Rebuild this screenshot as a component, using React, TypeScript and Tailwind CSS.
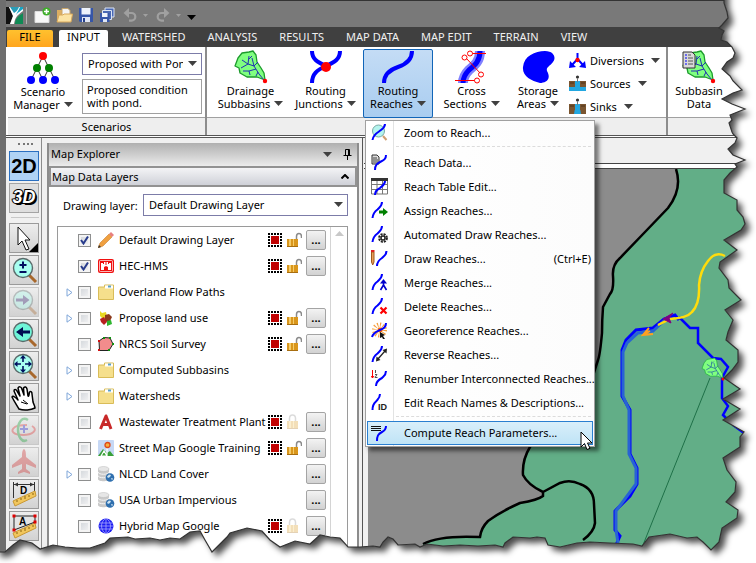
import React from 'react';
import { clsx } from 'clsx';

const Caret = ({ className = 'text-[#404040]' }: { className?: string }) => (
  <svg width="9" height="5" viewBox="0 0 9 5" className={clsx('inline-block shrink-0', className)}>
    <path d="M0 0h9L4.500 5z" fill="currentColor" />
  </svg>
);

/* ---------- Quick access bar ---------- */

const Logo = () => (
  <svg width="17" height="17" viewBox="0 0 17 17">
    <path d="M0 0h3l4 9-3 8H0z" fill="#111" />
    <path d="M3 0h14v4C11 8 9 11 8 17H4l3-8z" fill="#fff" />
    <path d="M4 0h9c-1 3-3 5-5 6z" fill="#2a9db8" />
    <path d="M17 6v11H9C9 12 12 9 17 6z" fill="#0f8a55" />
    <path d="M14 0h3v2c-2 2-5 3-7 6 1-3 3-5 4-8z" fill="#19a5c4" />
  </svg>
);

const NewIcon = () => (
  <svg width="17" height="17" viewBox="0 0 17 17">
    <path d="M1 4.500h14v11H1z" fill="#f8f8f8" stroke="#ddd" />
    <circle cx="12.500" cy="4.500" r="4" fill="#3fae2a" />
    <path d="M12.500 2v5M10 4.500h5" stroke="#fff" strokeWidth="1.600" />
  </svg>
);

const OpenIcon = () => (
  <svg width="17" height="17" viewBox="0 0 17 17">
    <path d="M1 3h5l1 1.500h7V15H1z" fill="#dcae62" />
    <path d="M6 1.500h6l2 2V11H6z" fill="#f5f5f5" stroke="#c9a66a" />
    <path d="M1 15l2-7h4l1-1h8.500L15 15z" fill="#fbe3a4" stroke="#d9a95a" />
  </svg>
);

const SaveIcon = () => (
  <svg width="16" height="16" viewBox="0 0 16 16">
    <path d="M1 1h14v14H2L1 14z" fill="#3656a8" />
    <path d="M3.500 1h9v6.500h-9z" fill="#eef3fb" />
    <path d="M4 10h8v5H4z" fill="#dfe6f5" />
    <path d="M5 11h2v4H5z" fill="#26408a" />
  </svg>
);

const SaveAllIcon = () => (
  <svg width="16" height="16" viewBox="0 0 16 16">
    <path d="M6 1h9v9H6z" fill="#4a69b5" stroke="#dce5f5" />
    <path d="M3.500 3.500h9v9h-9z" fill="#4a69b5" stroke="#dce5f5" />
    <path d="M1 6h9.500v9H1z" fill="#3656a8" />
    <path d="M3 6h5.500v4H3z" fill="#eef3fb" />
    <path d="M4 12h4v3H4z" fill="#dfe6f5" />
  </svg>
);

const UndoIcon = ({ flip = false }: { flip?: boolean }) => (
  <svg width="14" height="14" viewBox="0 0 14 14" className={flip ? '-scale-x-100' : ''}>
    <path d="M2 5h6.500a3.800 3.800 0 0 1 0 7.600H6" fill="none" stroke="#a0a0a0" strokeWidth="2.200" />
    <path d="M6 0L0.500 5L6 10z" fill="#a0a0a0" />
  </svg>
);

/* ---------- Ribbon icons ---------- */

const leaf = 'M0 15L3 7L7 2L14 1L18 0L21 4L22 11L26 17L29 22L30 29L22 26L12 26L5 22L4 17z';
const veins = 'M7 9L13 13L19 15L24 23L29 29M13 13L14 5M14 8L17 5M13 13L6 17M19 15L17 7M19 15L23 11M21 18L14 20L8 20M14 20L15 24M23 21L21 25';

const ScenarioIcon = () => (
  <svg width="34" height="34" viewBox="0 0 34 34">
    <path d="M17 5L5 29M17 5L29 29M11 17L17 29M23 17L17 29" stroke="#333" />
    <circle cx="17" cy="5" r="4" fill="#f00" />
    <circle cx="11" cy="17" r="4" fill="#008000" />
    <circle cx="23" cy="17" r="4" fill="#008000" />
    <circle cx="5" cy="29" r="4" fill="#00f" />
    <circle cx="17" cy="29" r="4" fill="#00f" />
    <circle cx="29" cy="29" r="4" fill="#00f" />
  </svg>
);

const SubbasinIcon = ({ sheet = false }: { sheet?: boolean }) => (
  <svg width="34" height="34" viewBox="0 0 34 34">
    <g transform="translate(1 1)">
      <path d={leaf} fill="#80ff80" stroke="#1c9a2c" strokeWidth="1.300" strokeLinejoin="round" />
      <path d={veins} fill="none" stroke="#2030b0" />
      <circle cx="30" cy="30" r="2.200" fill="#f00" />
    </g>
    {sheet && (
      <g>
        <path d="M1 2h9l3 3v13H1z" fill="#d9d9d9" stroke="#333" />
        <path d="M3 5h2M3 8h2M3 11h2M3 14h2" stroke="#00f" />
        <path d="M6 5h3M6 8h5M6 11h5M6 14h5" stroke="#555" />
      </g>
    )}
  </svg>
);

const JunctionIcon = () => (
  <svg width="34" height="34" viewBox="0 0 34 34">
    <path d="M3 1C3 9 8 12 17 16M31 1C31 9 26 12 17 16C8 20 3 24 3 33" fill="none" stroke="#00f" strokeWidth="4" />
    <circle cx="17" cy="17" r="5" fill="#f00" />
  </svg>
);

const ReachIcon = () => (
  <svg width="34" height="34" viewBox="0 0 34 34">
    <path d="M31 1C31 9 26 14 17 17C8 20 3 25 3 33" fill="none" stroke="#00f" strokeWidth="4" />
  </svg>
);

const CrossIcon = () => (
  <svg width="34" height="34" viewBox="0 0 34 34">
    <path d="M25 1C25 11 20 15 14 20C10 24 8 27 8 33" fill="none" stroke="#8080ff" strokeWidth="10" />
    <path d="M25 1C25 11 20 15 14 20C10 24 8 27 8 33" fill="none" stroke="#00f" strokeWidth="5" />
    <g stroke="#f00" fill="none">
      <path d="M16 3.500h15M11 8l15 16M0 30.500h20" />
      <circle cx="15" cy="3.500" r="2.500" fill="#fff" />
      <circle cx="9.500" cy="7.500" r="2.500" fill="#fff" />
      <circle cx="26" cy="24.500" r="2.500" fill="#fff" />
      <circle cx="22" cy="30.500" r="2.500" fill="#fff" />
    </g>
  </svg>
);

const StorageIcon = () => (
  <svg width="34" height="34" viewBox="0 0 34 34">
    <path d="M2 17C3 6 14 1 24 1C34 1 35 9 32 12C28 17 25 17 26 21C31 30 24 33 19 33C10 31 1 26 2 17z" fill="#00f" />
  </svg>
);

const DiversionIcon = () => (
  <svg width="17" height="17" viewBox="0 0 17 17">
    <path d="M8.500 1v7M8.500 7L3 13M8.500 7L14 13" stroke="#00f" strokeWidth="2" />
    <path d="M0 16l1-7 6 6zM17 16l-1-7-6 6z" fill="#00f" />
    <circle cx="8.500" cy="8" r="2.200" fill="#f00" />
  </svg>
);

const SourceIcon = ({ down = false }: { down?: boolean }) => (
  <svg width="17" height="17" viewBox="0 0 17 17">
    <path d="M0 6h17v10H0z" fill="#22a7e0" />
    <path d="M0 6h6v6H0zM11 6h6v6h-6z" fill="#7a5530" />
    <path d="M1 8h4M12 8h4" stroke="#4f3418" />
    {down && <path d="M0 10h6l-1 6H0zM11 10h6v6h-5z" fill="#7a5530" />}
    <circle cx="8.500" cy="2" r="1.600" fill="#333" />
    <path d="M8.500 3v4" stroke="#777" />
  </svg>
);

interface RibbonButtonProps {
  icon: React.ReactNode;
  top: string;
  bottom: string;
  caret?: boolean;
  active?: boolean;
}

const RibbonButton: React.FC<RibbonButtonProps> = ({ icon, top, bottom, caret = true, active }) => (
  <button
    className={clsx(
      'flex h-[69px] w-full flex-col items-center rounded-xs border leading-[13px]',
      active ? 'border-[#1165b8] bg-linear-to-b from-[#c4dcf5] to-[#a9cdf0]' : 'border-transparent'
    )}
  >
    {icon}
    <span className="whitespace-nowrap">{top}</span>
    <span className="flex items-center gap-1 whitespace-nowrap">
      {bottom}
      {caret && <Caret />}
    </span>
  </button>
);

/* ---------- Drop-down menu ---------- */

const curve = 'M15 1C15 5 13 6 10 7.500C6 9.500 4 11 4 16';
const curveLeft = 'M11 0C11 4 9 5 6.500 7.500C3 10 2 12 1.500 16';

const MenuIcon = ({ d, children }: { d: string; children?: React.ReactNode }) => (
  <svg width="17" height="17" viewBox="0 0 17 17" className="shrink-0">
    {children}
    <path d={d} fill="none" stroke="#00f" strokeWidth="2" />
  </svg>
);

const menuItems = [
  {
    label: 'Zoom to Reach...',
    sepAfter: true,
    icon: (
      <MenuIcon d="M14 0C14 4 11 5 8 7.500C4 10 2 12 1.500 16">
        <circle cx="7.500" cy="7" r="6" fill="#b4f4ee" stroke="#79a9a5" />
        <path d="M12 12l3.500 4" stroke="#d0a070" strokeWidth="2" />
      </MenuIcon>
    ),
  },
  {
    label: 'Reach Data...',
    icon: (
      <MenuIcon d={curve}>
        <path d="M1 1h5l2 2v7H1z" fill="#ddd" stroke="#333" />
        <path d="M2 4h4M2 6h5M2 8h5" stroke="#444" />
      </MenuIcon>
    ),
  },
  {
    label: 'Reach Table Edit...',
    icon: (
      <MenuIcon d="M14 3C14 7 11 8 9 10C6 12 4 13 4 17">
        <path d="M.5 1h16v15H.5zM6 2v14M11.500 2v14M0 6.500h17M0 11.500h17" fill="none" stroke="#777" />
        <path d="M0 0h17v3H0z" fill="#333" />
      </MenuIcon>
    ),
  },
  {
    label: 'Assign Reaches...',
    icon: (
      <MenuIcon d={curveLeft}>
        <path d="M8 8.500h4V6l5 4-5 4v-2.500H8z" fill="#008000" />
      </MenuIcon>
    ),
  },
  {
    label: 'Automated Draw Reaches...',
    icon: (
      <MenuIcon d={curveLeft}>
        <circle cx="12" cy="12" r="3.800" fill="#fff" stroke="#222" strokeWidth="2.200" strokeDasharray="2 1" />
        <circle cx="12" cy="12" r="2" fill="none" stroke="#222" strokeWidth="1.500" />
      </MenuIcon>
    ),
  },
  {
    label: 'Draw Reaches...',
    shortcut: '(Ctrl+E)',
    icon: (
      <MenuIcon d="M15.500 1C15.500 5 13 6 11 8C8 10 6 12 6 16">
        <path d="M.5 2h2.500v10L1.700 15 .5 12z" fill="#e8a05c" stroke="#a0581c" />
        <path d="M0 0h3.500v2H0z" fill="#e02020" />
      </MenuIcon>
    ),
  },
  {
    label: 'Merge Reaches...',
    icon: (
      <MenuIcon d={curveLeft}>
        <path d="M12.500 7v5M12.500 11L9.500 16M12.500 11l3 5" stroke="#00c" strokeWidth="1.600" />
        <path d="M9 9.500L12.500 5L16 9.500z" fill="#00c" />
      </MenuIcon>
    ),
  },
  {
    label: 'Delete Reaches...',
    icon: (
      <MenuIcon d={curveLeft}>
        <path d="M9.500 9.500l6 6M15.500 9.500l-6 6" stroke="#f00" strokeWidth="2.200" />
      </MenuIcon>
    ),
  },
  {
    label: 'Georeference Reaches...',
    icon: (
      <MenuIcon d="M15 1C15 5 12 7 9 8C5 10 2 11 1 15">
        <circle cx="8.500" cy="8" r="5" fill="none" stroke="#f5a142" strokeWidth="5" strokeDasharray="1 1.600" />
        <circle cx="9" cy="8" r="2.500" fill="#ff6a00" />
        <path d="M9 10l5 3-2 1 2 3h-2l-1-2-2 1z" fill="#111" />
      </MenuIcon>
    ),
  },
  {
    label: 'Reverse Reaches...',
    icon: (
      <MenuIcon d={curveLeft}>
        <path d="M6.500 13.500L14 5" stroke="#222" strokeWidth="1.300" />
        <path d="M16 2.500l-.5 5-4-3.500zM5 15.500l.5-5 4 3.500z" fill="#222" />
      </MenuIcon>
    ),
  },
  {
    label: 'Renumber Interconnected Reaches...',
    icon: (
      <MenuIcon d="M15 1C15 5 13 6 11 8C7 10 5 12 5 16">
        <path d="M1.500 0v8M0 6l1.500 2L3 6" fill="none" stroke="#f00" />
        <path d="M4.500 0v3M4 4.500h2l-2 3h2.500" fill="none" stroke="#555" />
      </MenuIcon>
    ),
  },
  {
    label: 'Edit Reach Names & Descriptions...',
    sepAfter: true,
    icon: (
      <MenuIcon d="M9 0C9 4 7 5 5 7.500C2 10 1.500 12 1.500 16">
        <text x="7" y="16" fontSize="9" fontWeight="bold" fontFamily="Liberation Sans" fill="#222">ID</text>
      </MenuIcon>
    ),
  },
  {
    label: 'Compute Reach Parameters...',
    highlighted: true,
    icon: (
      <MenuIcon d="M15 2C15 6 13 7 11 8C7 10 6 12 6 17">
        <path d="M0 2.500h10M0 4.500h10M0 6.500h10" stroke="#111" />
      </MenuIcon>
    ),
  },
];

const ReachMenu = () => (
  <div
    role="menu"
    className="absolute left-[2px] top-[71px] z-20 w-[230px] border border-[#a0a0a0] bg-linear-to-r from-white from-[28px] to-[#fcfcfc] pb-px shadow-[4px_4px_4px_rgba(0,0,0,0.5)]"
  >
    <div className="absolute inset-y-0 left-[27px] w-px bg-[#e2e3e3]" />
    {menuItems.map((item) => (
      <React.Fragment key={item.label}>
        <button
          role="menuitem"
          className={clsx(
            'relative mx-px flex h-[24px] w-[226px] items-center border pb-px pl-[3px]',
            item.highlighted ? 'border-[#2a7fd0] bg-linear-to-b from-[#d9effa] to-[#bfe4f6]' : 'border-transparent'
          )}
        >
          {item.icon}
          <span className="ml-[16px] whitespace-nowrap">{item.label}</span>
          {item.shortcut && <span className="ml-auto pr-px">{item.shortcut}</span>}
        </button>
        {item.sepAfter && <div className="ml-[30px] mr-[3px] mt-px h-[5px] border-t border-dashed border-[#dcdcdc]" />}
      </React.Fragment>
    ))}
    <svg width="14" height="20" viewBox="0 0 14 20" className="absolute -bottom-[5px] right-0">
      <path d="M1 1v15l3.500-3.500L7 18.500l3-1.200L7.500 12H12z" fill="#fff" stroke="#000" />
    </svg>
  </div>
);

/* ---------- Left tool strip ---------- */

const Lens = ({ fill = '#a8fff0', children }: { fill?: string; children: React.ReactNode }) => (
  <svg width="28" height="28" viewBox="0 0 28 28">
    <path d="M19 19l7 7" stroke="#a8682c" strokeWidth="3" />
    <circle cx="13" cy="12" r="9.500" fill={fill} stroke="#5a6a6a" strokeWidth="1.400" />
    {children}
  </svg>
);

const ruler = (
  <g>
    <path d="M3 21L25 11l1 5L5 26z" fill="#f1c65c" stroke="#c99835" />
    <path d="M7 20v2M11 18v2M15 16v3M19 15v2M23 13v2" stroke="#8a6410" />
  </g>
);

const tools = [
  {
    name: 'Pointer',
    icon: (
      <svg width="28" height="28" viewBox="0 0 28 28">
        <path d="M8 3v18l4-4 4 9 3-1-4-9h5z" fill="#fff" stroke="#111" />
        <path d="M28 19v9h-9z" fill="#000" />
      </svg>
    ),
  },
  { name: 'Zoom in or out', icon: <Lens><path d="M13 5.500v7M9.500 9h7M9.500 16h7" stroke="#001060" strokeWidth="2" /></Lens> },
  { name: 'Zoom forward', off: true, icon: <Lens><path d="M6 10.500h7V7l6.500 5-6.500 5v-3.500H6z" fill="#302070" /></Lens> },
  { name: 'Zoom back', icon: <Lens fill="#6ff5d8"><path d="M20 10.500h-7V7l-7 5 7 5v-3.500h7z" fill="#000a50" /></Lens> },
  {
    name: 'Zoom extents',
    icon: (
      <Lens>
        <path d="M13 5v5M13 14v5M6 12h5M15 12h5" stroke="#001060" strokeWidth="1.600" />
        <path d="M13 3l-3 3.500h6zM13 21l-3-3.500h6zM4 12l3.500-3v6zM22 12l-3.500-3v6z" fill="#001060" />
      </Lens>
    ),
  },
  {
    name: 'Pan',
    icon: (
      <svg width="28" height="28" viewBox="0 0 28 28">
        <path
          d="M9 25C6 20 4 17 2 13C3 11 6 14 8 16L4 7C4 5 6 5 7 7L10 12L8 4C9 2 11 3 11.500 4L14 11L13.500 4C15 2 16.500 3 17 5L18 12C19 13 19 10 19.500 8C21 7 22 8 22 10L23 18C24 21 25 22 25 24C21 26 14 27 9 25z"
          fill="#fff"
          stroke="#000"
          strokeWidth="1.500"
          strokeLinejoin="round"
        />
        <path d="M13 16l5 4M11 18l6 2" stroke="#000" />
      </svg>
    ),
  },
  {
    name: 'Rotate',
    off: true,
    icon: (
      <svg width="28" height="28" viewBox="0 0 28 28" fill="none">
        <path d="M22 10C29 14 22 19 13 19C4 19 -1 15 5 11C8 9 12 9 17 9" stroke="#e03030" strokeWidth="2" />
        <path d="M18 4C12 0 8 7 8 13C8 21 12 27 17 24" stroke="#10a030" strokeWidth="2.500" />
        <path d="M14 9v8M10 13h8" stroke="#2020d0" strokeWidth="2" />
      </svg>
    ),
  },
  {
    name: 'Fly',
    off: true,
    icon: (
      <svg width="28" height="28" viewBox="0 0 28 28">
        <path d="M14 1C16 2 16 6 16 9L26 17v3l-10-4v5l4 3v2l-6-2-6 2v-2l4-3v-5L2 20v-3l10-8C12 6 12 2 14 1z" fill="#d02828" />
      </svg>
    ),
  },
  {
    name: 'Measure distance',
    icon: (
      <svg width="28" height="28" viewBox="0 0 28 28">
        <path d="M3.500 2v16M24.500 2v9M4 4.500h20" stroke="#333" />
        <path d="M4 4.500l4-2v4zM24 4.500l-4-2v4z" fill="#333" />
        <text x="10" y="14" fontSize="10" fontWeight="bold" fontFamily="Liberation Sans">D</text>
        {ruler}
      </svg>
    ),
  },
  {
    name: 'Measure area',
    icon: (
      <svg width="28" height="28" viewBox="0 0 28 28">
        {ruler}
        <path d="M4 4h21v6L4 18z" fill="#e4e4e4" stroke="#222" />
        <path d="M2.500 2.500h3v3h-3zM23.500 2.500h3v3h-3zM23.500 8.500h3v3h-3zM2.500 16.500h3v3h-3z" fill="#e00000" />
        <text x="9" y="13" fontSize="10" fontWeight="bold" fontFamily="Liberation Sans">A</text>
      </svg>
    ),
  },
];

/* ---------- Layer list ---------- */

const layerIcons: Record<string, React.ReactNode> = {
  pencil: (
    <svg width="16" height="16" viewBox="0 0 16 16">
      <path d="M0 16l2-5L11 2l3 3-9 9z" fill="#f0a040" stroke="#c98030" strokeWidth=".6" />
      <path d="M11 2l2-2 3 3-2 2z" fill="#e88080" />
      <path d="M0 16l1-3 2 2z" fill="#333" />
    </svg>
  ),
  castle: (
    <svg width="16" height="16" viewBox="0 0 16 16">
      <rect x="0" y="1" width="16" height="14" rx="2" fill="#f01010" />
      <rect x="1.500" y="2.500" width="13" height="11" rx="1" fill="none" stroke="#fff" strokeWidth=".7" />
      <path d="M3 5h2v1h1V4h4v2h1V5h2v7h-3V9L8 8 6 9v3H3z" fill="#fff" />
      <path d="M8 4v3" stroke="#f01010" />
    </svg>
  ),
  folder: (
    <svg width="16" height="16" viewBox="0 0 16 16">
      <path d="M.5 3h6V1h9v14.500H.5z" fill="#f5df8c" stroke="#d9bc58" />
      <path d="M7 1.500h8v3H7z" fill="#fff" />
      <path d="M10 1.500h3v2h-3z" fill="#5aa0c8" />
    </svg>
  ),
  landuse: (
    <svg width="16" height="16" viewBox="0 0 16 16">
      <path d="M2 1l2 2 4-1 1 5-4 2-3-3z" fill="#e8d820" />
      <path d="M7 5l4-1 3 3-2 4-5 1z" fill="#8c3a1c" />
      <path d="M2 9l4-2 3 5-3 3-3-3z" fill="#b82020" />
      <path d="M9 11l4-1 1 4-5 2z" fill="#2fb52f" />
    </svg>
  ),
  soil: (
    <svg width="16" height="16" viewBox="0 0 16 16">
      <path d="M1 5L6 1.500L12 2l3 6-4 6.500H1.500z" fill="#f28c8c" stroke="#222" />
      <path d="M5 1h2v2H5zM11 1h2v2h-2zM14 7h2v2h-2zM10 13h2v2h-2z" fill="#109010" />
      <path d="M0 4h2v2H0zM0 13h2v2H0z" fill="#d01010" />
    </svg>
  ),
  letter: (
    <svg width="16" height="16" viewBox="0 0 16 16">
      <path d="M2.500 15L8 2L13 15M4 10.500h8" fill="none" stroke="#c82828" strokeWidth="3" strokeLinejoin="round" />
    </svg>
  ),
  street: (
    <svg width="16" height="16" viewBox="0 0 16 16">
      <rect width="16" height="16" rx="1" fill="#c6d8f5" />
      <path d="M0 16L5 9l4 4 3-2 4 5z" fill="#38a038" />
      <path d="M3 16l3-5 3 5zM9 16V9h1" fill="none" stroke="#fff" strokeWidth="1.200" />
      <circle cx="9.500" cy="5" r="2.500" fill="#f5b040" stroke="#e04818" strokeWidth="1.300" />
    </svg>
  ),
  database: (
    <svg width="17" height="16" viewBox="0 0 17 16">
      <path d="M0 3v10c0 3 11 3 11 0V3z" fill="#c9c9c9" />
      <path d="M0 6c0 3 11 3 11 0M0 9.500c0 3 11 3 11 0" fill="none" stroke="#f6f6f6" />
      <ellipse cx="5.500" cy="3" rx="5.500" ry="2.500" fill="#e6e6e6" stroke="#bbb" strokeWidth=".5" />
      <circle cx="12" cy="11.500" r="4.300" fill="#2f6fae" />
      <path d="M9 10.500l2-2 2 .5-1 2-2 1zM13 12l2 .5-1 2z" fill="#cde3f2" />
    </svg>
  ),
  globe: (
    <svg width="16" height="16" viewBox="0 0 16 16">
      <circle cx="8" cy="8" r="7.500" fill="#1c1cf0" />
      <path d="M1 5h14M0 8h16M1 11h14M8 0v16M8 0C2 4 2 12 8 16M8 0c6 4 6 12 0 16" fill="none" stroke="#a8a8ff" strokeWidth=".8" />
    </svg>
  ),
};

const layers = [
  { name: 'Default Drawing Layer', icon: 'pencil', checked: true, lock: 'open', more: true },
  { name: 'HEC-HMS', icon: 'castle', checked: true, lock: 'open', more: true },
  { name: 'Overland Flow Paths', icon: 'folder', expand: true },
  { name: 'Propose land use', icon: 'landuse', expand: true, lock: 'open', more: true },
  { name: 'NRCS Soil Survey', icon: 'soil', lock: 'open', more: true },
  { name: 'Computed Subbasins', icon: 'folder', expand: true },
  { name: 'Watersheds', icon: 'folder', expand: true },
  { name: 'Wastewater Treatment Plant', icon: 'letter', lock: 'closed', more: true },
  { name: 'Street Map Google Training', icon: 'street', lock: 'open', more: true },
  { name: 'NLCD Land Cover', icon: 'database', expand: true, more: true },
  { name: 'USA Urban Impervious', icon: 'database', more: true },
  { name: 'Hybrid Map Google', icon: 'globe', lock: 'closed', more: true },
];

const Lock = ({ open }: { open: boolean }) => (
  <svg width="15" height="16" viewBox="0 0 15 16" className={open ? '' : 'opacity-30'}>
    <path
      d={open ? 'M9.500 7V4.500a2.500 3 0 0 1 5 0V6' : 'M2.500 8V4.500a3 3.500 0 0 1 6 0V8'}
      fill="none"
      stroke="#8a8a8a"
      strokeWidth="1.500"
    />
    <path d="M0 7h11v8H0z" fill="#d9961c" />
    <path d="M2 7h2v8H2zM6 7h1v8H6z" fill="#f5cc6a" />
    <path d="M0 14.500h11" stroke="#a86e10" />
  </svg>
);

const LayerRow = ({ layer }: { layer: (typeof layers)[number] }) => (
  <li className="flex h-[26px] items-center pl-[6px]">
    <span className="flex w-[14px] items-center pl-[2px]">
      {layer.expand && (
        <svg width="7" height="9" viewBox="0 0 7 9">
          <path d="M1 .8v7.400L6 4.500z" fill="#fff" stroke="#7fa6d9" />
        </svg>
      )}
    </span>
    <label className="flex items-center">
      <input
        type="checkbox"
        defaultChecked={layer.checked}
        className="peer h-[13px] w-[13px] appearance-none border border-[#8e8f8f] bg-linear-to-br from-[#cfd3d8] to-[#f6f6f6] shadow-[inset_0_0_0_2px_#f4f4f4]"
      />
      <svg width="9" height="9" viewBox="0 0 9 9" className="-ml-[11px] mr-[2px] hidden peer-checked:block">
        <path d="M1 4l2.500 3.500L8 .5" fill="none" stroke="#283c8c" strokeWidth="2" />
      </svg>
      <span className="ml-[7px] flex w-[21px] shrink-0">{layerIcons[layer.icon]}</span>
      <span className="w-[149px] whitespace-nowrap pb-px">{layer.name}</span>
    </label>
    {layer.lock && (
      <>
        <svg width="14" height="14" viewBox="0 0 14 14" className="mr-[5px] shrink-0">
          <path d="M0 1h14M0 13h14" stroke="#000" strokeWidth="2" strokeDasharray="2 1" />
          <path d="M1 3v9M13 3v9" stroke="#000" strokeWidth="2" strokeDasharray="2 1" />
          <rect x="3" y="3" width="8" height="8" fill="#c00000" />
        </svg>
        <Lock open={layer.lock === 'open'} />
      </>
    )}
    {layer.more && (
      <button
        aria-label={`${layer.name} options`}
        className="ml-auto mr-[4px] h-[20px] w-[20px] rounded-xs border border-[#a4a4a4] bg-linear-to-b from-[#f3f3f3] to-[#d2d2d2] font-bold leading-[18px]"
      >
        ...
      </button>
    )}
  </li>
);

/* ---------- Map canvas ---------- */

const shore =
  'M676 169C680 181 678 195 668 208L645 232L620 258Q612 265 613 276Q614 290 610 294L603 307Q602 320 602 333Q600 355 598 360L590 385L530 447Q522 460 523 475Q528 485 543 492V496Q538 500 520 503Q500 512 488 521Q481 528 480 537Q440 535 423 544';

const MapCanvas = () => (
  <svg viewBox="368 169 388 394" preserveAspectRatio="xMinYMin slice" className="h-full w-full" fill="none">
    <rect x="368" y="169" width="388" height="394" fill="#8c8c8c" />
    <path d={`${shore}V563H756V169z`} fill="#62ae87" />
    <path d={`${shore}M543 492L560 483Q570 479 580 484Q594 489 594 504L595 523Q594 532 583 540`} stroke="#000" strokeWidth="2.500" />
    <path d="M710 378L643 545" stroke="#1f7048" />
    <path
      d="M679 320L675 315L664 319L653 328L636 330L626 340L622 350V396L630 410V454L637 468V484L630 496L615 511V530L620 536L616 545"
      stroke="#0000ff"
      strokeWidth="3"
    />
    <path d="M666 319L653 331L638 333L627 343L623 352V396L629 410V454L636 468V484L616 511V530L618 543" stroke="#2863d4" strokeWidth="3" />
    <path d="M679 317L690 328H698V343L713 358L721 359L728 367L722 378V398L728 406L723 415L726 418M733 425L744 433" stroke="#0000ff" strokeWidth="2.500" />
    <path d="M725 256Q715 251 708 261Q700 271 699 285Q700 304 692 312Q687 318 670 319L658 325" stroke="#ffdc0c" strokeWidth="2.500" />
    <path d="M673 313L663 319L671 323L669 318z" fill="#800080" stroke="#800080" />
    <path d="M649 328L643 335L653 334M643 335L650 331" stroke="#ffa020" strokeWidth="2" />
    <g transform="translate(702 358) scale(.7)">
      <path d={leaf} fill="#80ff80" stroke="#1fae3c" />
      <path d={veins} stroke="#2060a0" />
      <circle cx="30" cy="30" r="2.200" fill="#f00" />
    </g>
  </svg>
);

/* Ragged paper edge along the right and bottom of the window */
const edge =
  'L724 0L724 3L727 12L728 18L722 25L719 28L724 31L722 35L721 40L727 42L732 47L735 53L733 58L727 62L722 69L730 76L733 81L742 90L733 93L722 99L732 104L745 109L730 115L732 120L729 123L732 132L733 134L737 138L735 143L728 149L733 155L745 160L735 164L737 167L730 173L724 180L724 193L737 200L737 210L743 217L745 224L741 230L724 240L737 250L720 262L719 268L728 280L729 288L741 300L725 310L733 320L728 332L726 340L738 350L738 362L732 370L724 378L740 389L723 399L740 409L723 420L744 432L740 437L740 447L723 458L727 470L736 482L735 492L726 502L738 510L737 518L722 528L719 542L711 550L703 542L697 537L687 538L670 534L649 537L642 546L633 544L610 543L590 542L577 543L560 547L548 545L545 538L537 537L530 538L513 537L505 543L503 547L495 545L478 546L460 545L443 546L427 544L420 547L415 544L398 545L393 539L388 537L383 542L380 547L373 546L360 547L348 547L340 538L330 537L320 535L310 544L295 541L280 547L270 540L262 531L247 528L230 533L227 537L212 552L205 540L200 531L190 532L180 539L170 538L160 540L150 538L135 539L128 537L110 538L105 543L90 548L77 548L65 547L53 545L40 549L32 543L20 540L13 545L5 552L0 552';

const TornEdge = () => (
  <svg
    viewBox="0 0 756 563"
    preserveAspectRatio="none"
    className="pointer-events-none absolute inset-0 z-30 h-full w-full"
    aria-hidden="true"
  >
    <defs>
      <clipPath id="outside">
        <path d={`M756 0${edge}V563H756z`} />
      </clipPath>
      <filter id="soft" x="-5%" y="-5%" width="110%" height="110%">
        <feGaussianBlur stdDeviation="3" />
      </filter>
    </defs>
    <g clipPath="url(#outside)">
      <rect width="756" height="563" fill="#fff" />
      <path d={`M-5 -20H724${edge}H-5z`} transform="translate(5 5)" fill="#000" fillOpacity=".7" filter="url(#soft)" />
    </g>
    <path d={`M724 0${edge}`} fill="none" stroke="#333" strokeWidth="1.200" />
  </svg>
);

const tabs = [
  { name: 'FILE', className: 'w-[46px] bg-linear-to-b from-[#ffc12e] to-[#ffa51d] text-black rounded-t-xs' },
  { name: 'INPUT', className: 'ml-[6px] mr-[14px] w-[49px] bg-white text-black rounded-t-xs' },
  { name: 'WATERSHED', className: 'mr-[22px] text-[#f0f0f0]' },
  { name: 'ANALYSIS', className: 'mr-[22px] text-[#f0f0f0]' },
  { name: 'RESULTS', className: 'mr-[22px] text-[#f0f0f0]' },
  { name: 'MAP DATA', className: 'mr-[22px] text-[#f0f0f0]' },
  { name: 'MAP EDIT', className: 'mr-[22px] text-[#f0f0f0]' },
  { name: 'TERRAIN', className: 'mr-[22px] text-[#f0f0f0]' },
  { name: 'VIEW', className: 'text-[#f0f0f0]' },
];

const smallButtons = [
  { name: 'Diversions', icon: <DiversionIcon /> },
  { name: 'Sources', icon: <SourceIcon /> },
  { name: 'Sinks', icon: <SourceIcon down /> },
];

const App: React.FC = () => {
  return (
    <div className="relative h-screen w-full overflow-hidden bg-white font-['Noto_Sans','Open_Sans',sans-serif] text-[11px] leading-[13px] text-black">
      <div className="flex h-full flex-col border-l-[6px] border-[#6e6e6e] bg-[#f0f0f0]">
        {/* Title bar */}
        <header className="flex h-[27px] shrink-0 items-center border-t border-[#333] bg-[#797979] pt-[2px]">
          <Logo />
          <span className="ml-[3px] h-[17px] w-px bg-[#b4b4b4]" />
          <div className="ml-[7px] flex items-center gap-[5px]">
            <button aria-label="New"><NewIcon /></button>
            <button aria-label="Open"><OpenIcon /></button>
            <button aria-label="Save"><SaveIcon /></button>
            <button aria-label="Save all"><SaveAllIcon /></button>
            <button aria-label="Undo" className="ml-[3px] flex items-center gap-[6px]">
              <UndoIcon />
              <svg width="5" height="3"><path d="M0 0h5L2.500 3z" fill="#a0a0a0" /></svg>
            </button>
            <button aria-label="Redo" className="ml-[3px] flex items-center gap-[6px]">
              <UndoIcon flip />
              <svg width="5" height="3"><path d="M0 0h5L2.500 3z" fill="#a0a0a0" /></svg>
            </button>
            <button aria-label="Customize" className="ml-px flex pt-[5px]"><Caret className="text-black" /></button>
          </div>
        </header>

        {/* Tabs */}
        <nav className="flex h-[20px] shrink-0 items-end bg-[#404040] pl-px">
          {tabs.map((tab) => (
            <button
              key={tab.name}
              className={clsx('flex h-[17px] justify-center whitespace-nowrap leading-[14px]', tab.className)}
            >
              {tab.name}
            </button>
          ))}
        </nav>

        {/* Ribbon */}
        <section className="flex h-[91px] shrink-0 border-b-[3px] border-double border-[#555] bg-white pl-[2px]">
          <div className="flex w-[199px] shrink-0 flex-col border-r-2 border-[#8c8c8c]">
            <div className="flex h-[71px] border-b border-[#a0a0a0] pt-[3px]">
              <div className="w-[70px]">
                <RibbonButton icon={<ScenarioIcon />} top="Scenario" bottom="Manager" />
              </div>
              <div className="ml-[4px] w-[120px] pt-[3px]">
                <div className="relative">
                  <select
                    aria-label="Scenario"
                    className="h-[22px] w-full appearance-none rounded-none border border-[#7c7ca8] bg-white pl-[5px] pr-[18px] leading-[18px]"
                  >
                    <option>Proposed with Pond</option>
                  </select>
                  <span className="pointer-events-none absolute right-[5px] top-[8px] flex"><Caret /></span>
                </div>
                <textarea
                  aria-label="Scenario description"
                  defaultValue="Proposed condition with pond."
                  className="mt-[4px] block h-[35px] w-full resize-none overflow-hidden border border-[#a0a0a0] px-[4px] pt-[3px]"
                />
              </div>
            </div>
            <div className="flex-1 bg-[#eee] pt-[2px] text-center">Scenarios</div>
          </div>

          <div className="flex w-[461px] shrink-0 flex-col border-r-2 border-[#8c8c8c]">
            <div className="flex h-[71px] border-b border-[#a0a0a0] pl-[6px] pt-[2px]">
              <div className="w-[75px]">
                <RibbonButton icon={<SubbasinIcon />} top="Drainage" bottom="Subbasins" />
              </div>
              <div className="w-[75px]">
                <RibbonButton icon={<JunctionIcon />} top="Routing" bottom="Junctions" />
              </div>
              <div className="relative w-[70px]">
                <RibbonButton icon={<ReachIcon />} top="Routing" bottom="Reaches" active />
                <ReachMenu />
              </div>
              <div className="w-[77px]">
                <RibbonButton icon={<CrossIcon />} top="Cross" bottom="Sections" />
              </div>
              <div className="w-[56px]">
                <RibbonButton icon={<StorageIcon />} top="Storage" bottom="Areas" />
              </div>
              <div className="ml-[3px] flex flex-col gap-[6px] pt-[3px]">
                {smallButtons.map((b) => (
                  <button key={b.name} className="flex h-[17px] items-center gap-[4px]">
                    {b.icon}
                    {b.name}
                    <span className="ml-[3px] flex"><Caret /></span>
                  </button>
                ))}
              </div>
            </div>
            <div className="flex-1 bg-[#eee]" />
          </div>

          <div className="flex flex-1 flex-col">
            <div className="h-[71px] border-b border-[#a0a0a0] pt-[2px]">
              <div className="w-[62px]">
                <RibbonButton icon={<SubbasinIcon sheet />} top="Subbasin" bottom="Data" caret={false} />
              </div>
            </div>
            <div className="flex-1 bg-[#eee]" />
          </div>
        </section>

        {/* Workspace */}
        <main className="flex min-h-0 flex-1">
          <aside className="flex w-[36px] shrink-0 flex-col gap-[2px] overflow-hidden border-r border-[#8c8c8c] pl-[3px] pt-[5px]">
            <div className="mb-[4px] h-[2px] w-[15px] shrink-0 self-center border-t-2 border-dotted border-[#777]" />
            <button className="h-[30px] w-[30px] shrink-0 border border-[#2a6fc0] bg-[#b0d3f5] font-['Liberation_Sans'] text-[20px] font-bold">2D</button>
            <button className="h-[30px] w-[30px] shrink-0 border border-[#a4a4a4] bg-[#dedede]" aria-label="3D">
              <span className="font-['Liberation_Sans'] text-[18px] font-bold italic text-white [paint-order:stroke] [-webkit-text-stroke:2px_#000] [text-shadow:2px_2px_0_#000]">3D</span>
            </button>
            <div className="mx-[2px] mb-[2px] mt-[2px] h-[2px] shrink-0 border-t border-[#c8c8c8]" />
            {tools.map((tool) => (
              <button
                key={tool.name}
                aria-label={tool.name}
                className={clsx(
                  'h-[30px] w-[30px] shrink-0 border bg-linear-to-b from-[#ededed] to-[#d2d2d2]',
                  tool.off ? 'border-[#c8c8c8]' : 'border-[#9a9a9a]'
                )}
              >
                <span className={tool.off ? 'opacity-35' : ''}>{tool.icon}</span>
              </button>
            ))}
          </aside>

          <section className="ml-[5px] mt-[5px] flex w-[312px] shrink-0 flex-col border-x-2 border-[#8c8c8c] bg-white">
            <div className="flex h-[23px] shrink-0 items-center bg-linear-to-b from-[#b0b0b0] to-[#ececec] pl-[2px]">
              <span className="flex-1 pb-[2px]">Map Explorer</span>
              <Caret />
              <svg width="9" height="11" viewBox="0 0 9 11" className="ml-[11px] mr-[5px]">
                <path d="M2.500.5h4v6h-4zM5.500 1v5M.5 6.500h8M4.500 7v4" fill="none" stroke="#000" />
              </svg>
            </div>
            <div className="flex h-[21px] shrink-0 items-center border-2 border-[#929292] bg-linear-to-b from-[#f4f4f6] to-[#cfd1d8] pl-px pr-[6px]">
              <span className="flex-1">Map Data Layers</span>
              <svg width="8" height="5" viewBox="0 0 8 5">
                <path d="M.5 4.500L4 1l3.500 3.500" fill="none" stroke="#000" strokeWidth="2" />
              </svg>
            </div>
            <div className="mt-[7px] flex shrink-0 items-center pl-[14px] pr-[9px]">
              <label htmlFor="drawing-layer" className="w-[80px] whitespace-nowrap">Drawing layer:</label>
              <div className="relative flex-1">
                <select
                  id="drawing-layer"
                  className="h-[22px] w-full appearance-none rounded-none border border-[#7c7ca8] bg-white pl-[5px] leading-[18px]"
                >
                  <option>Default Drawing Layer</option>
                </select>
                <span className="pointer-events-none absolute right-[5px] top-[8px] flex"><Caret /></span>
              </div>
            </div>
            <div className="ml-[8px] mr-[9px] mt-[10px] flex min-h-0 flex-1 overflow-hidden border border-[#9a9a9a]">
              <ul className="flex-1">
                {layers.map((layer) => (
                  <LayerRow key={layer.name} layer={layer} />
                ))}
              </ul>
              <div className="flex w-[17px] justify-center border-l border-[#d4d4d4] pt-[4px]">
                <svg width="9" height="5" viewBox="0 0 9 5"><path d="M0 5L4.500 0L9 5z" fill="#c8c8c8" /></svg>
              </div>
            </div>
          </section>

          <section className="ml-[3px] flex min-w-0 flex-1 flex-col border-l border-[#555]">
            <div className="h-[25px] shrink-0" />
            <div className="ml-px h-[6px] shrink-0 border-y border-[#444] bg-white" />
            <div className="min-h-0 flex-1 bg-[#f0f0f0] pl-[5px]">
              <MapCanvas />
            </div>
          </section>
        </main>
      </div>

      <TornEdge />
    </div>
  );
};

export default App;
